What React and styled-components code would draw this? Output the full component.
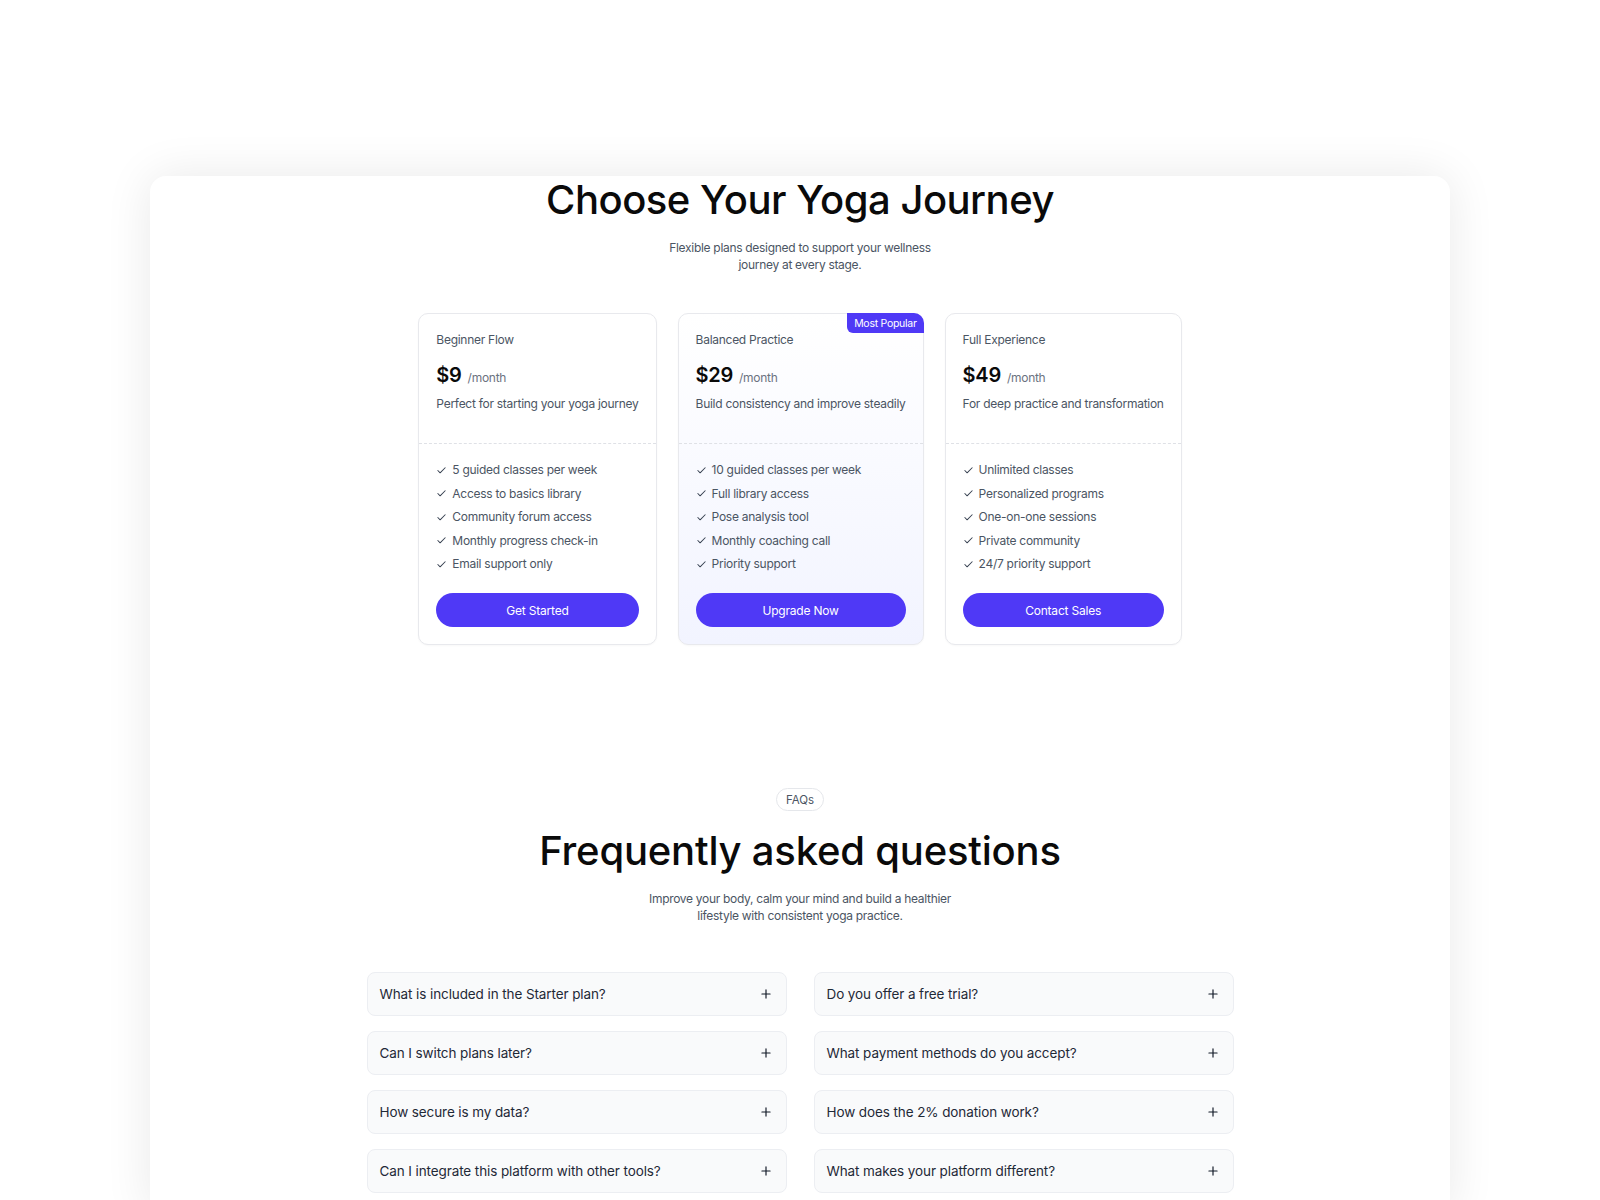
import React from "react";
import styled, { createGlobalStyle } from "styled-components";
import { Check, Plus } from "lucide-react";

const GlobalStyle = createGlobalStyle`
  html, body { margin: 0; padding: 0; background: #ffffff; }
  body { font-family: Inter, "Noto Sans", "Liberation Sans", sans-serif; color: #111827; }
  * { box-sizing: border-box; }
`;

const Page = styled.div`
  padding-top: 176px;
  display: flex;
  justify-content: center;
  height: 1200px;
  overflow: hidden;
`;

const Frame = styled.div`
  width: 1300px;
  height: 1040px;
  background: #ffffff;
  border-radius: 16px;
  box-shadow: 0 0 48px rgba(0, 0, 0, 0.09);
  display: flex;
  flex-direction: column;
  align-items: center;
  overflow: hidden;
`;

const Heading = styled.h1`
  margin: 0;
  font-size: 40px;
  line-height: 48px;
  font-weight: 500;
  letter-spacing: ${(p) => p.$ls || "-0.5px"};
  color: #0a0a0a;
  text-align: center;
`;

const Lead = styled.p`
  margin: ${(p) => p.$mt}px 0 0;
  max-width: ${(p) => p.$max}px;
  font-size: 12px;
  line-height: 17px;
  letter-spacing: -0.3px;
  color: #4b5563;
  text-align: center;
`;

const Plans = styled.div`
  margin-top: 40px;
  display: flex;
  gap: 21px;
  align-items: stretch;
  letter-spacing: -0.27px;
`;

const PlanCard = styled.div`
  position: relative;
  flex: none;
  display: flex;
  flex-direction: column;
  border: 1px solid #e8e9ed;
  border-radius: 10px;
  background: ${(p) =>
    p.$featured ? "linear-gradient(180deg, #ffffff 0%, #f2f4ff 100%)" : "#ffffff"};
  box-shadow: 0 1px 2px rgba(16, 24, 40, 0.03);
`;

const Badge = styled.span`
  position: absolute;
  top: -1px;
  right: -1px;
  height: 20px;
  padding: 0 7px;
  display: flex;
  align-items: center;
  background: #4f39f6;
  color: #ffffff;
  font-size: 10.5px;
  font-weight: 400;
  border-radius: 0 10px 0 6px;
`;

const PlanTop = styled.div`
  padding: 17px 17px 30px;
  border-bottom: 1px dashed #dfe1e6;
  display: flex;
  flex-direction: column;
`;

const PlanName = styled.div`
  font-size: 12px;
  line-height: 18px;
  color: #4b5563;
`;

const PriceRow = styled.div`
  margin-top: 12px;
  height: 28px;
  display: flex;
  align-items: baseline;
  gap: 6px;
`;

const Price = styled.span`
  font-size: 20px;
  font-weight: 600;
  color: #0a0a0a;
  line-height: 28px;
`;

const Per = styled.span`
  font-size: 12px;
  color: #6b7280;
`;

const PlanDesc = styled.div`
  margin-top: 6px;
  font-size: 12px;
  line-height: 18px;
  color: #4b5563;
  white-space: nowrap;
`;

const PlanBottom = styled.div`
  padding: 17px 17px 17px;
  display: flex;
  flex-direction: column;
`;

const Features = styled.ul`
  list-style: none;
  margin: 0;
  padding: 0;
  display: flex;
  flex-direction: column;
  gap: 5.6px;
`;

const Feature = styled.li`
  display: flex;
  align-items: center;
  gap: 5px;
  font-size: 12px;
  line-height: 18px;
  color: #4b5563;
  svg { flex: none; color: #374151; }
`;

const Cta = styled.button`
  margin-top: 20px;
  height: 34px;
  width: 100%;
  border: none;
  border-radius: 999px;
  background: #4f39f6;
  color: #ffffff;
  font-family: inherit;
  font-size: 12px;
  font-weight: 400;
  letter-spacing: -0.2px;
  cursor: pointer;
`;

const Pill = styled.span`
  margin-top: 143px;
  height: 23px;
  padding: 0 9px;
  display: inline-flex;
  align-items: center;
  border: 1px solid #e5e7eb;
  border-radius: 999px;
  font-size: 11.5px;
  color: #4b5563;
`;

const FaqHeading = styled(Heading)`
  margin-top: 16px;
`;

const FaqGrid = styled.div`
  margin-top: 48px;
  display: grid;
  grid-template-columns: 420px 420px;
  column-gap: 27px;
  row-gap: 14.8px;
`;

const FaqRow = styled.div`
  height: 44px;
  padding: 0 13px 0 12px;
  display: flex;
  align-items: center;
  justify-content: space-between;
  background: #f9fafb;
  border: 1px solid #eceef2;
  border-radius: 8px;
  font-size: 13.5px;
  letter-spacing: -0.1px;
  color: #1f2937;
  svg { color: #111827; flex: none; }
`;

const plans = [
  {
    name: "Beginner Flow",
    price: "$9",
    desc: "Perfect for starting your yoga journey",
    features: [
      "5 guided classes per week",
      "Access to basics library",
      "Community forum access",
      "Monthly progress check-in",
      "Email support only",
    ],
    cta: "Get Started",
  },
  {
    name: "Balanced Practice",
    price: "$29",
    desc: "Build consistency and improve steadily",
    features: [
      "10 guided classes per week",
      "Full library access",
      "Pose analysis tool",
      "Monthly coaching call",
      "Priority support",
    ],
    cta: "Upgrade Now",
    featured: true,
  },
  {
    name: "Full Experience",
    price: "$49",
    desc: "For deep practice and transformation",
    features: [
      "Unlimited classes",
      "Personalized programs",
      "One-on-one sessions",
      "Private community",
      "24/7 priority support",
    ],
    cta: "Contact Sales",
  },
];

const faqs = [
  "What is included in the Starter plan?",
  "Do you offer a free trial?",
  "Can I switch plans later?",
  "What payment methods do you accept?",
  "How secure is my data?",
  "How does the 2% donation work?",
  "Can I integrate this platform with other tools?",
  "What makes your platform different?",
];

export default function App() {
  return (
    <>
      <GlobalStyle />
      <Page>
        <Frame>
          <Heading>Choose Your Yoga Journey</Heading>
          <Lead $mt={15} $max={290}>
            Flexible plans designed to support your wellness journey at every stage.
          </Lead>
          <Plans>
            {plans.map((p) => (
              <PlanCard key={p.name} $featured={p.featured}>
                {p.featured && <Badge>Most Popular</Badge>}
                <PlanTop>
                  <PlanName>{p.name}</PlanName>
                  <PriceRow>
                    <Price>{p.price}</Price>
                    <Per>/month</Per>
                  </PriceRow>
                  <PlanDesc>{p.desc}</PlanDesc>
                </PlanTop>
                <PlanBottom>
                  <Features>
                    {p.features.map((f) => (
                      <Feature key={f}>
                        <Check size={11} strokeWidth={2.2} />
                        {f}
                      </Feature>
                    ))}
                  </Features>
                  <Cta>{p.cta}</Cta>
                </PlanBottom>
              </PlanCard>
            ))}
          </Plans>
          <Pill>FAQs</Pill>
          <FaqHeading $ls="-0.2px">Frequently asked questions</FaqHeading>
          <Lead $mt={15} $max={320}>
            Improve your body, calm your mind and build a healthier lifestyle with consistent yoga practice.
          </Lead>
          <FaqGrid>
            {faqs.map((q) => (
              <FaqRow key={q}>
                <span>{q}</span>
                <Plus size={14} strokeWidth={2} />
              </FaqRow>
            ))}
          </FaqGrid>
        </Frame>
      </Page>
    </>
  );
}
